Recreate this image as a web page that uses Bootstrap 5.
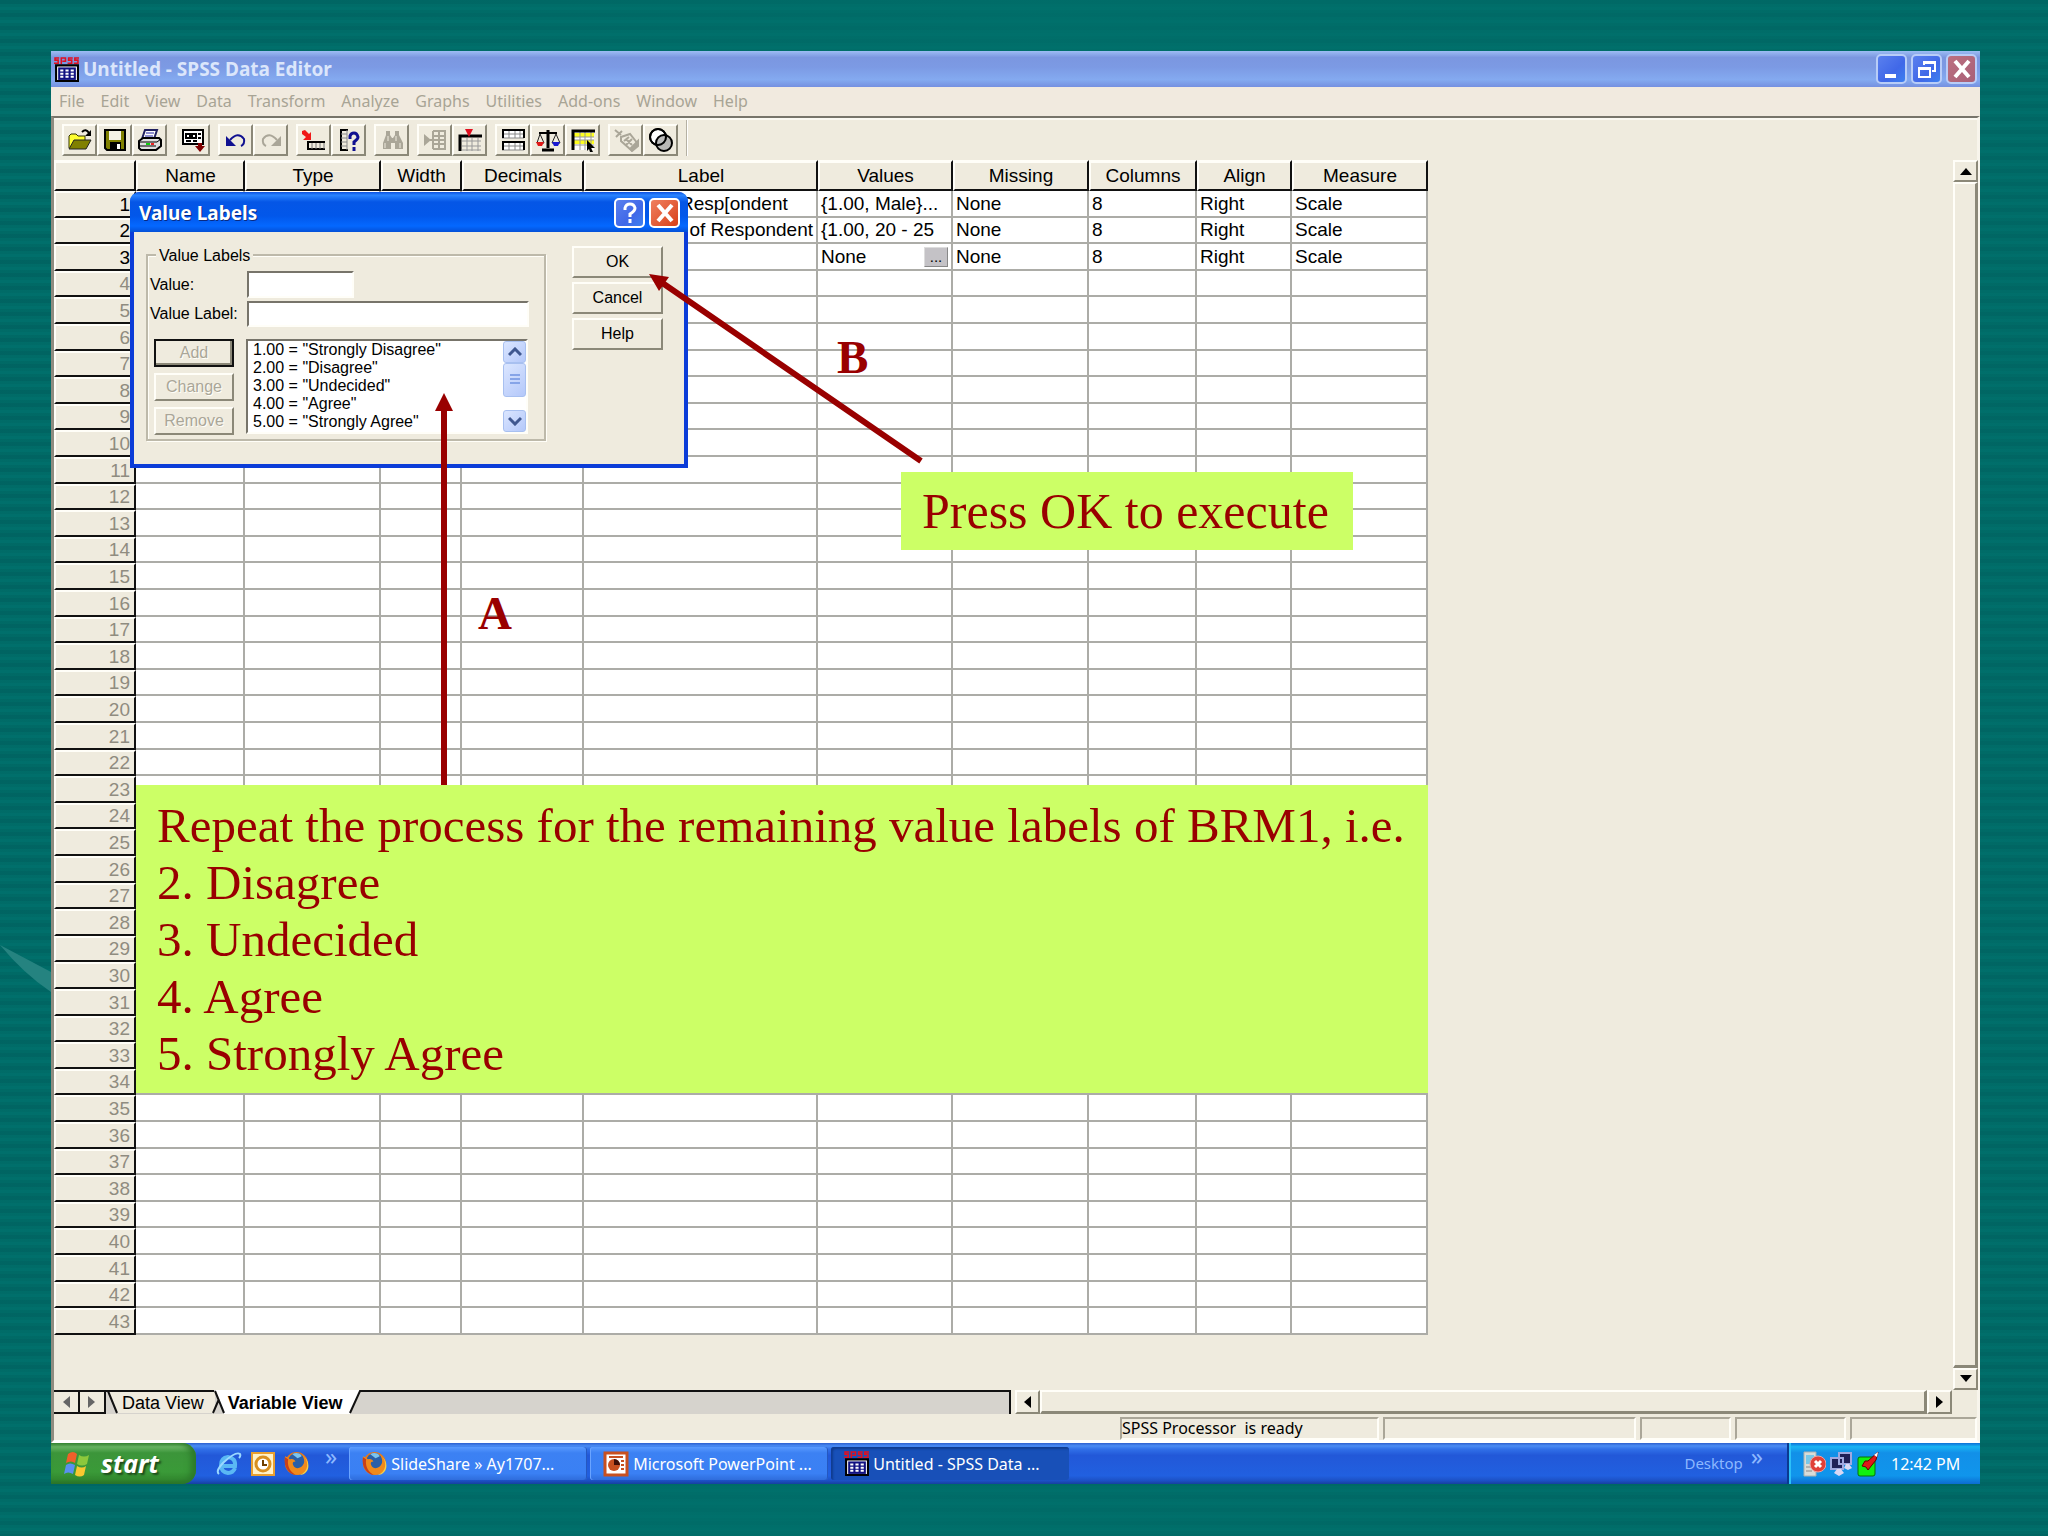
<!DOCTYPE html>
<html lang="en">
<head>
<meta charset="utf-8">
<meta name="viewport" content="width=device-width, initial-scale=1">
<title>Untitled - SPSS Data Editor</title>
<link href="https://cdn.jsdelivr.net/npm/bootstrap@5.3.0/dist/css/bootstrap.min.css" rel="stylesheet">
<style>
:root{--face:#efebde;--shade:#8b8878;--line:#acaca7;--maroon:#990000;--lime:#ccff66}
body{background:#006b68;font-family:"Liberation Sans",Arial,sans-serif;color:#000}
button,input,select{font:inherit;color:inherit;border-radius:0}
.slide{min-height:100vh;padding:51px 68px 52px 51px;background:
 linear-gradient(100deg,rgba(0,110,106,0) 0,rgba(0,112,107,.75) 45%,rgba(0,108,104,.2) 100%),
 repeating-linear-gradient(#006361 0 4px,#006b67 4px 7px,#006f6b 7px 10px,#006965 10px 13px)}
.streak{left:0;top:940px;width:51px;height:54px}
.appwin{background:var(--face)}
.tahoma{font-family:"Noto Sans","Open Sans",sans-serif}
.titlebar{height:36px;padding:0 3px;background:linear-gradient(#9dbdf4,#7b97e0 18%,#7c9ae4 45%,#84aaf0 80%,#7590e0);color:#dbe6fb;font-size:19px;font-weight:700}
.winbtn{width:31px;height:30px;padding:0;border:2px solid #b8cdf8;border-radius:5px;background:linear-gradient(135deg,#5a80ee,#4068e8 60%,#3c80f0);line-height:0}
.winbtn.closer{background:linear-gradient(135deg,#bc7080,#a86078)}
.menubar{height:29px;padding-bottom:2px;background:#f1eadf;font-size:16px}
.menubar a{color:#a8a495;text-decoration:none;padding:0 8px}
.client{border-top:2px solid #77746a;border-left:3px solid #8f8c80;border-right:3px solid #f8f5ec;border-bottom:3px solid #fff}
.toolbar{height:42px;padding:6px 0 0 8px;box-shadow:inset 0 2px #fbf9f2}
.toolset{display:flex;margin-right:8px}
.tool{width:35px;height:32px;padding:0;border:2px solid;border-color:#fffef8 #8b8878 #8b8878 #fffef8;background:var(--face);line-height:0}
.toolend{width:2px;height:36px;margin-top:-4px;background:#b5b1a3;border-right:1px solid #fff}
.grid{table-layout:fixed;width:1374px;border-collapse:separate;border-spacing:0;font-size:19px;line-height:22px}
.grid th{font-weight:400;background:var(--face)}
.grid thead th{height:31px;padding:0;text-align:center;border:2px solid;border-color:#fffef8 #111 #111 #fffef8;box-shadow:inset 0 1px #fffef8;line-height:24px}
.grid tbody th{padding:0 4px 0 0;text-align:right;border:2px solid;border-color:#fffef8 #111 #111 #fffef8;color:#8f8c80}
.grid tbody tr{height:27px}
.grid tbody tr:nth-child(5n+2),.grid tbody tr:nth-child(5n+4){height:26px}
.grid tbody td{padding:0 3px;background:#fff;border-right:2px solid var(--line);border-bottom:2px solid var(--line);white-space:nowrap;overflow:hidden}
.grid tbody tr.filled th{color:#000}
.grid .morebtn{width:24px;height:20px;padding:0;margin-top:1px;border:1px solid;border-color:#ddd #888 #888 #ddd;background:#c4c2c6;line-height:8px;font-size:15px}
.vscroll{width:25px;margin-right:-1px}
.sbtn{width:25px;height:24px;padding:0;border:2px solid;border-color:#fffef8 #8b8878 #8b8878 #fffef8;background:var(--face);line-height:0}
.vscroll .sbtn{height:22px}
.sthumb{border:2px solid;border-color:#fffef8 #8b8878 #8b8878 #fffef8;border-width:2px 3px 3px 2px}
.sheetbar{height:24px;margin-right:25px}
.tabstrip{width:957px;border-top:2px solid #111;border-right:2px solid #111}
.tabbtn{width:26px;border:0;border-right:2px solid #111;border-bottom:2px solid #111;padding:0;background:var(--face);line-height:0}
.tabfill{position:relative;background:#d6d3cd}
.tabart{position:absolute;left:0;top:-2px;width:260px;height:24px}
.tabfill a{position:relative;color:#000;text-decoration:none;font-size:18px;line-height:22px}
.statusbar{height:26px;padding-top:3px;gap:4px;font-size:16px;line-height:18px}
.pane{border:2px solid;border-color:#aaa698 #fffef8 #fffef8 #aaa698;height:23px;white-space:pre}
.taskbar{height:41px;background:linear-gradient(#2c5fd0,#4a8cf4 7%,#3170e8 15%,#2258d8 30%,#2160e0 80%,#1c50c4 92%,#1640a0);color:#fff;font-size:16px}
.startbtn{width:145px;border:0;border-radius:0 14px 14px 0;padding:0 0 0 12px;background:linear-gradient(#3f8f3c,#6cb868 9%,#3c953a 24%,#3a9a38 70%,#338a30 88%,#2a7028);box-shadow:inset -5px 0 6px #2c7a2a;color:#fff;font-size:25px;font-weight:700;font-style:italic;text-shadow:2px 2px 2px #1c4a1a}
.tasks{gap:3px}
.task{width:238px;height:33px;border:0;border-radius:3px;padding:0 0 0 13px;background:linear-gradient(#5a9bff,#3c81f3 18%,#3a80f4 80%,#2f6ddc);box-shadow:inset 1px 0 #6aa4ff,inset -1px 0 #2558c0;color:#fff;white-space:nowrap;text-align:left}
.task.pressed{background:#1850b8;box-shadow:inset 2px 2px 2px #103c90}
.tray{width:193px;gap:3px;padding-left:13px;background:linear-gradient(#0d70d8,#19b4f4 9%,#1290e8 24%,#1095ec 80%,#0c6cd0);border-left:2px solid #0a3a90;box-shadow:inset 2px 0 #2cc0f8}
.dim{color:#8cb8ff}
.desklabel{font-size:15px}
.dialogbox{left:79px;top:141px;width:558px;border:4px solid #0b3cd8;border-top:0;border-radius:10px 10px 0 0;background:var(--face);font-size:16px;line-height:18px}
.dlgtitle{height:40px;margin:0 -4px;padding:1px 8px 0 9px;border-radius:9px 9px 0 0;background:linear-gradient(#0a50e0,#2a84ff 8%,#0556e6 25%,#0257ea 60%,#0468ff 85%,#0450d8);color:#fff;font-size:19px;font-weight:700;text-shadow:1px 1px #0a2a80}
.dlgtitle .winbtn{border-color:#fff}
.dlgtitle .closer{background:linear-gradient(135deg,#f08060,#d84018)}
.dlgbody{padding:14px 21px 23px 12px;gap:26px}
.vgroup{width:402px;border:2px solid #bdb9aa;box-shadow:inset 1px 1px #fffef8,1px 1px #fffef8;margin-top:8px;padding:15px 0 4px 2px;position:relative}
.vgroup legend{position:absolute;left:8px;top:-10px;float:none;width:auto;margin:0;padding:0 3px;background:var(--face);font-size:16px;line-height:20px}
.vrow{display:flex;align-items:center}
.vrow label{width:97px;white-space:nowrap}
.vrow + .vrow{margin-top:3px}
.sunk{border:2px solid;border-color:#77746a #fffef8 #fffef8 #77746a;background:#fff;padding:0;outline:0}
.vbtns{gap:6px}
.vbtn{width:80px;height:28px;padding:0;border:2px solid;border-color:#fffef8 #8b8878 #8b8878 #fffef8;background:var(--face)}
.vbtn:disabled{color:#aaa698;text-shadow:1px 1px #fffef8}
.vbtn.preset{border-color:#111;box-shadow:inset -2px -2px #8b8878}
.okbtn{width:91px;height:32px;padding:0;border:2px solid;border-color:#fffef8 #8b8878 #8b8878 #fffef8;background:var(--face)}
.listbox{width:282px;height:95px}
.listbox select{border:0;outline:0;appearance:none;-webkit-appearance:none;background:#fff;overflow:hidden;padding:0;height:91px}
.listbox option{padding:0 5px;min-height:18px;line-height:18px}
.xpbtn{width:23px;height:22px;padding:0;border:1px solid #a8c0f0;border-radius:3px;background:linear-gradient(135deg,#dbe6ff,#b4c8fa);line-height:0}
.xpthumb{height:34px}
.callout{background:var(--lime);color:var(--maroon);font-family:"Liberation Serif",Georgia,serif;line-height:57px;white-space:nowrap}
.pressbox{left:850px;top:421px;width:452px;padding:11px 21px 10px;font-size:50px}
.repeatbox{left:85px;top:734px;width:1292px;padding:12px 21px 11px;font-size:49px}
.letter{color:var(--maroon);font-family:"Liberation Serif",Georgia,serif;font-size:47px;line-height:52px;font-weight:700}
.lettera{left:427px;top:536px}
.letterb{left:786px;top:280px}
.arrows{left:0;top:0;width:1000px;height:740px;pointer-events:none}
</style>
<script src="https://cdn.jsdelivr.net/npm/bootstrap@5.3.0/dist/js/bootstrap.bundle.min.js"></script>
</head>
<body>
<svg width="0" height="0" class="position-absolute" aria-hidden="true">
 <symbol id="spss" viewBox="0 0 24 24"><path d="M5 1H1v2h3v3H0M7 7V1h4v3H8M18 1h-4v2h3v3h-4M24 1h-4v2h3v3h-4" fill="none" stroke="#e01020" stroke-width="1.5"/><path d="M2 8h21v15H2z" fill="#fff" stroke="#000" stroke-width="2"/><path d="M4 10h17v12H4z" fill="#101080"/><path d="M6 13h3m2 0h3m2 0h3M6 16h3m2 0h3m2 0h3M6 19h3m2 0h3m2 0h3" stroke="#fff" stroke-width="2"/></symbol>
 <symbol id="fox" viewBox="0 0 24 24"><circle cx="12" cy="12" r="11" fill="#e8791a"/><circle cx="12" cy="10" r="8" fill="#2a5fa8"/><path d="M8 3c3-2 8-1 9 2l-4 2z" fill="#7cc4ee"/><path d="M1 5c3 1 4 3 5 3 2-1 4 0 5 2-3 0-3 2-2 4 2 4 8 3 10-2 1-3 0-6-2-9 7 5 8 13 2 18C11 26-1 20 1 5z" fill="#f08a1c"/><path d="M20 6c5 8 1 15-5 17 9 0 11-11 5-17z" fill="#fcd040"/><path d="M1 6c-2 9 4 16 10 17C5 19 3 14 4 8z" fill="#c8401a"/></symbol>
 <symbol id="cross" viewBox="0 0 24 24"><path d="M5 4l14 16M19 4L5 20" stroke="#fff" stroke-width="4"/></symbol>
</svg>

<main class="slide position-relative d-flex">
 <svg class="streak position-absolute" viewBox="0 0 51 54" aria-hidden="true"><path d="M0 5L51 32v20Q24 34 0 5z" fill="#258380"/></svg>
 <div class="appwin position-relative d-flex flex-column flex-grow-1">

  <header class="titlebar tahoma d-flex align-items-center gap-1">
   <svg width="25" height="25" aria-hidden="true"><use href="#spss"/></svg>
   <span class="flex-grow-1">Untitled - SPSS Data Editor</span>
   <button class="winbtn" aria-label="Minimize"><svg width="24" height="24"><path d="M5 17h11v4H5z" fill="#fff"/></svg></button>
   <button class="winbtn" aria-label="Restore"><svg width="24" height="24" fill="none" stroke="#fff" stroke-width="2"><path d="M4 11h11v9H4zM4 12h11M9 8V5h11v9h-3M9 6h11"/></svg></button>
   <button class="winbtn closer" aria-label="Close"><svg width="24" height="24"><use href="#cross"/></svg></button>
  </header>

  <nav class="menubar tahoma d-flex align-items-center">
   <a href="#">File</a><a href="#">Edit</a><a href="#">View</a><a href="#">Data</a><a href="#">Transform</a><a href="#">Analyze</a><a href="#">Graphs</a><a href="#">Utilities</a><a href="#">Add-ons</a><a href="#">Window</a><a href="#">Help</a>
  </nav>

  <div class="client d-flex flex-column flex-grow-1">
   <div class="toolbar d-flex">
    <div class="toolset">
     <button class="tool" aria-label="Open"><svg width="26" height="24"><path d="M2 20V8l2-2h5l2 2h7v4" fill="#ffff30" stroke="#333300"/><path d="M2 21l5-9h17l-5 9z" fill="#808000" stroke="#222"/><path d="M15 4q4-4 7 1" fill="none" stroke="#000" stroke-width="2"/><path d="M24 2v6h-6z"/></svg></button>
     <button class="tool" aria-label="Save"><svg width="26" height="24"><path d="M3 2h20v20H5l-2-2z" fill="#808000" stroke="#000" stroke-width="2"/><path d="M7 3h12v9H7z" fill="#f4f2e6"/><path d="M8 14h11v8H8z"/><path d="M15 16h3v5h-3z" fill="#fff"/></svg></button>
     <button class="tool" aria-label="Print"><svg width="26" height="24"><path d="M8 2h12l-3 9H5z" fill="#fff" stroke="#202060" stroke-width="2"/><path d="M9 5h8M8 8h8" stroke="#2020a0"/><path d="M2 13l4-3h16l2 2v6l-5 4H4l-2-2z" fill="#ddd" stroke="#000" stroke-width="2"/><path d="M3 14h17l4-3M3 18h16" stroke="#000" fill="none"/><path d="M9 15h4v2H9z" fill="#1c1"/><path d="M14 15h3v2h-3z" fill="#e22"/></svg></button>
    </div>
    <div class="toolset">
     <button class="tool" aria-label="Recall dialogs"><svg width="26" height="24"><path d="M3 2h20v14H3z" fill="#fff" stroke="#000" stroke-width="2"/><path d="M6 6h4v4H6zM12 6h4v4h-4z" fill="none" stroke="#000" stroke-width="2"/><path d="M18 6h3m-3 4h3M6 13h5m2 0h4" stroke="#000" stroke-width="2"/><path d="M15 18h3v-3h4v3h3l-5 6z" fill="#800000"/></svg></button>
    </div>
    <div class="toolset">
     <button class="tool" aria-label="Undo"><svg width="26" height="24"><path d="M7 12q8-9 14-1q1 5-3 7" fill="none" stroke="#101090" stroke-width="2"/><path d="M3 8v10h10z" fill="#101090"/></svg></button>
     <button class="tool" aria-label="Redo"><svg width="26" height="24"><path d="M19 12q-8-9-14-1q-1 5 3 7" fill="none" stroke="#aaa698" stroke-width="2"/><path d="M23 8v10H13z" fill="#aaa698"/></svg></button>
    </div>
    <div class="toolset">
     <button class="tool" aria-label="Go to case"><svg width="26" height="24"><path d="M1 3l3-1 4 4 2-2v8H2l3-3-4-3z" fill="#f01818"/><path d="M24 14H7v7h17" fill="none" stroke="#000" stroke-width="2"/><path d="M11 15v6m4-6v6m4-6v6m4-6v6" stroke="#777"/></svg></button>
     <button class="tool" aria-label="Variables"><svg width="26" height="24"><path d="M5 2h7M5 22h7M5 1v22" stroke="#000" stroke-width="2" fill="none"/><path d="M5 6h6m-6 4h6m-6 4h6m-6 4h6M11 2v20" stroke="#888"/><path d="M14 11V8q1-3 4-3t4 4q0 2-4 5v3m0 2v4" fill="none" stroke="#101090" stroke-width="3"/></svg></button>
    </div>
    <div class="toolset">
     <button class="tool" aria-label="Find"><svg width="26" height="24" fill="#aaa698"><path d="M7 3h4v4l2 3h1l2-3V3h4v4l4 8v6h-8v-6h-4v6H4v-6l3-8z"/><path d="M6 15v5M9 8v5m8-5v5m4 2v5" stroke="#efebde"/></svg></button>
    </div>
    <div class="toolset">
     <button class="tool" aria-label="Insert cases"><svg width="26" height="24"><path d="M2 6l7 6-7 6z" fill="#aaa698"/><path d="M11 3h13M11 8h13M8 12h16M11 16h13M11 21h13M11 3v18M17 3v19M23 3v19" stroke="#aaa698" stroke-width="2"/></svg></button>
     <button class="tool" aria-label="Insert variable"><svg width="26" height="24"><path d="M3 23V8h22" fill="none" stroke="#000" stroke-width="3"/><path d="M5 13h19M5 18h19M5 22h19M10 10v13m5-13v13m6-13v13" stroke="#999" stroke-width="1"/><path d="M8 1h8l-4 8z" fill="#e01020"/></svg></button>
    </div>
    <div class="toolset">
     <button class="tool" aria-label="Split file"><svg width="26" height="24"><path d="M2 2h22v8H2zM2 14h22v8H2z" fill="#fff"/><path d="M2 6h22M2 18h22M9 2v8m6-8v8m5-8v8M9 14v8m6-8v8m5-8v8M2 10h22M2 22h22" stroke="#888"/><path d="M2 2h23M2 14h23" stroke="#000" stroke-width="2"/><path d="M3 1v9m0 3v9M24 1v9m0 3v9" stroke="#000" stroke-width="2"/></svg></button>
     <button class="tool" aria-label="Weight cases"><svg width="26" height="24"><path d="M13 2v18M7 22h12" stroke="#000" stroke-width="3"/><path d="M4 5h18" stroke="#000" stroke-width="2"/><path d="M5 6L2 15h7zM21 6l-4 9h8z" fill="none" stroke="#222"/><path d="M1 14h8l-2 4H3z" fill="#e01818"/><path d="M17 14h8l-2 4h-4z" fill="#1818d0"/></svg></button>
     <button class="tool" aria-label="Select cases"><svg width="26" height="24"><path d="M4 3h20v19H4z" fill="#fff"/><path d="M4 5h20v4H4zM4 12h20v4H4z" fill="#ffff20"/><path d="M4 9h20M4 12h20M4 17h20M10 4v18m5-18v18m6-18v18" stroke="#999"/><path d="M3 22V3h22" fill="none" stroke="#000" stroke-width="3"/><path d="M17 12l8 8h-4l2 4h-3l-1-3-2 2z"/></svg></button>
    </div>
    <div class="toolset">
     <button class="tool" aria-label="Value labels"><svg width="26" height="24" fill="none" stroke="#aaa698" stroke-width="2"><path d="M2 2l6 5m-5 2l6-6M8 9l9-3 8 10-7 6L8 13zM13 11l6 6m-6 0l6-6m-8 2l5-4"/><path d="M18 20l7-7v5l-6 5z" fill="#aaa698"/></svg></button>
     <button class="tool" aria-label="Use sets"><svg width="26" height="24" stroke="#000" stroke-width="2"><circle cx="10" cy="9" r="8" fill="#fff"/><circle cx="16" cy="15" r="8" fill="#aaa" fill-opacity=".8"/><circle cx="10" cy="9" r="8" fill="none"/></svg></button>
    </div>
    <div class="toolend"></div>
   </div>

   <div class="d-flex flex-grow-1">
    <div class="flex-grow-1">
     <table class="grid">
      <colgroup><col style="width:82px"><col style="width:109px"><col style="width:136px"><col style="width:81px"><col style="width:122px"><col style="width:234px"><col style="width:135px"><col style="width:136px"><col style="width:108px"><col style="width:95px"><col style="width:136px"></colgroup>
      <thead><tr><th></th><th>Name</th><th>Type</th><th>Width</th><th>Decimals</th><th>Label</th><th>Values</th><th>Missing</th><th>Columns</th><th>Align</th><th>Measure</th></tr></thead>
      <tbody id="vars">
       <tr class="filled"><th>1</th><td></td><td></td><td></td><td></td><td class="ps-5"><span class="ms-5">Resp[ondent</span></td><td>{1.00, Male}...</td><td>None</td><td>8</td><td>Right</td><td>Scale</td></tr>
       <tr class="filled"><th>2</th><td></td><td></td><td></td><td></td><td class="text-end">of Respondent</td><td>{1.00, 20 - 25</td><td>None</td><td>8</td><td>Right</td><td>Scale</td></tr>
       <tr class="filled"><th>3</th><td></td><td></td><td></td><td></td><td></td><td><div class="d-flex justify-content-between">None<button class="morebtn" aria-label="Edit values">...</button></div></td><td>None</td><td>8</td><td>Right</td><td>Scale</td></tr>
      </tbody>
     </table>
    </div>
    <div class="vscroll d-flex flex-column">
     <button class="sbtn" aria-label="Scroll up"><svg width="12" height="8"><path d="M0 8l6-7 6 7z"/></svg></button>
     <div class="sthumb flex-grow-1"></div>
     <button class="sbtn" aria-label="Scroll down"><svg width="12" height="8"><path d="M0 0l6 7 6-7z"/></svg></button>
    </div>
   </div>

   <div class="sheetbar d-flex">
    <div class="tabstrip d-flex">
     <button class="tabbtn" aria-label="Previous tab"><svg width="8" height="12"><path d="M8 0v12L1 6z" fill="#666"/></svg></button>
     <button class="tabbtn" aria-label="Next tab"><svg width="8" height="12"><path d="M0 0v12l7-6z" fill="#666"/></svg></button>
     <nav class="tabfill flex-grow-1">
      <svg class="tabart" aria-hidden="true"><path d="M2 1l9 22h98V1z" fill="#efebde"/><path d="M108 0h147l-11 24H118z" fill="#fff"/><path d="M0 1h108M2 1l9 22M118 23L109 1M107 23l6-14M244 23l10-22h6" fill="none" stroke="#111" stroke-width="2"/></svg>
      <a href="#" class="ms-3">Data View</a><a href="#" class="ms-4 fw-bold">Variable View</a>
     </nav>
    </div>
    <div class="d-flex flex-grow-1 ms-1">
     <button class="sbtn" aria-label="Scroll left"><svg width="8" height="12"><path d="M7 0v12L0 6z"/></svg></button>
     <div class="sthumb flex-grow-1"></div>
     <button class="sbtn" aria-label="Scroll right"><svg width="8" height="12"><path d="M0 0v12l7-6z"/></svg></button>
    </div>
   </div>

   <footer class="statusbar tahoma d-flex justify-content-end">
    <div class="pane" style="width:259px">SPSS Processor  is ready</div><div class="pane" style="width:253px"></div><div class="pane" style="width:91px"></div><div class="pane" style="width:111px"></div><div class="pane" style="width:127px"></div>
   </footer>
  </div>

  <div class="taskbar tahoma d-flex align-items-center">
   <button class="startbtn align-self-stretch d-flex align-items-center gap-2"><svg width="30" height="28" aria-hidden="true"><path d="M5 4q5-4 9 0l-2 9q-4-3-9 0z" fill="#f0602a"/><path d="M16 5q5 3 10 0l-2 9q-5 3-10 0z" fill="#8cc83c"/><path d="M3 15q4-3 9 0l-2 9q-5-3-9 0z" fill="#5a90f0"/><path d="M14 16q5 3 9 0l-2 9q-4 3-9 0z" fill="#f8c830"/></svg>start</button>
   <div class="d-flex align-items-center ps-3 ms-1 gap-2 flex-grow-1">
    <svg width="26" height="26" aria-label="Internet Explorer"><path d="M19 17q-2 5-7 5-7-1-7-8t7-8q8 1 7 9H6" fill="none" stroke="#5ab8f4" stroke-width="4"/><path d="M3 23q-4-3 5-12Q20 0 24 3q1 2-1 4" fill="none" stroke="#9ad8ff" stroke-width="2"/></svg>
    <svg width="26" height="26" aria-label="Outlook"><path d="M2 2h22v22H2z" fill="#fff2c8" stroke="#e8a030" stroke-width="2"/><circle cx="13" cy="13" r="7" fill="#fff" stroke="#d89020" stroke-width="3"/><path d="M13 9v5h4" fill="none" stroke="#704000" stroke-width="2"/></svg>
    <svg width="25" height="25" aria-label="Firefox"><use href="#fox"/></svg>
    <span class="dim fs-4 lh-1 mb-3 ms-2 me-1">»</span>
    <div class="tasks d-flex">
     <button class="task d-flex align-items-center gap-1"><svg width="25" height="25" aria-hidden="true"><use href="#fox"/></svg><span>SlideShare » Ay1707...</span></button>
     <button class="task d-flex align-items-center gap-1"><svg width="26" height="26" aria-hidden="true"><path d="M2 2h22v22H2z" fill="#fff" stroke="#c85020" stroke-width="3"/><path d="M6 6h14M18 10h3m-3 4h3m-3 4h3" stroke="#c85020" stroke-width="2"/><circle cx="11" cy="14" r="6" fill="#c85020"/><path d="M11 14V8a6 6 0 0 1 6 6z" fill="#401008"/></svg><span>Microsoft PowerPoint ...</span></button>
     <button class="task pressed d-flex align-items-center gap-1"><svg width="25" height="25" aria-hidden="true"><use href="#spss"/></svg><span>Untitled - SPSS Data ...</span></button>
    </div>
   </div>
   <span class="dim desklabel">Desktop</span><span class="dim fs-4 lh-1 mb-3 ms-2 me-4">»</span>
   <div class="tray align-self-stretch d-flex align-items-center">
    <svg width="24" height="26" aria-label="Messenger"><path d="M2 1h12v24H2z" fill="#d8dcd8" stroke="#a8b0b0"/><path d="M4 4h8v9H4z" fill="#78c8e8"/><path d="M4 16h6m-6 4h6" stroke="#888"/><circle cx="16" cy="13" r="8" fill="#e04038" stroke="#f0a0a0"/><path d="M13 10l6 6m0-6l-6 6" stroke="#fff" stroke-width="3"/></svg>
    <svg width="24" height="26" aria-label="Network"><path d="M10 2h12v11H10zM2 7h12v11H2z" fill="#202058" stroke="#a0a8e0" stroke-width="2"/><path d="M5 22l3-4h4l3 4-5 3zM15 17l2-4h3l3 4-4 2z" fill="#d8d8f4"/></svg>
    <svg width="24" height="26" aria-label="Quick launch"><rect x="2" y="6" width="17" height="19" rx="2" fill="#10f010" stroke="#087008"/><path d="M22 1l-2 8-8 10-2-3-4-1 3-5h3z" fill="#e01818" stroke="#600"/><path d="M22 1l-1 5-3-2z" fill="#fff"/></svg>
    <span class="ms-2">12:42 PM</span>
   </div>
  </div>

  <section class="dialogbox position-absolute" role="dialog" aria-label="Value Labels">
   <div class="dlgtitle tahoma d-flex align-items-center gap-1"><span class="flex-grow-1">Value Labels</span>
    <button class="winbtn" aria-label="Context help"><svg width="24" height="24"><path d="M7 9V7q1-4 5-4t5 4q0 3-5 6v3m0 2v4" fill="none" stroke="#fff" stroke-width="3"/></svg></button>
    <button class="winbtn closer" aria-label="Close dialog"><svg width="24" height="24"><use href="#cross"/></svg></button></div>
   <div class="dlgbody d-flex">
    <fieldset class="vgroup"><legend>Value Labels</legend>
     <div class="vrow"><label for="val">Value:</label><input id="val" class="sunk" style="width:107px;height:27px"></div>
     <div class="vrow"><label for="vlab">Value Label:</label><input id="vlab" class="sunk" style="width:282px;height:26px"></div>
     <div class="d-flex mt-2 pt-1">
      <div class="vbtns d-flex flex-column ms-1 me-2 pe-1"><button class="vbtn preset" disabled>Add</button><button class="vbtn" disabled>Change</button><button class="vbtn" disabled>Remove</button></div>
      <div class="listbox sunk d-flex">
       <select size="5" class="flex-grow-1" aria-label="Defined value labels"><option>1.00 = "Strongly Disagree"</option><option>2.00 = "Disagree"</option><option>3.00 = "Undecided"</option><option>4.00 = "Agree"</option><option>5.00 = "Strongly Agree"</option></select>
       <div class="d-flex flex-column">
        <button class="xpbtn" aria-label="List up"><svg width="14" height="10"><path d="M1 8l6-6 6 6" fill="none" stroke="#405890" stroke-width="3"/></svg></button>
        <div class="xpbtn xpthumb d-flex align-items-center justify-content-center"><svg width="10" height="12"><path d="M0 1h10M0 5h10M0 9h10" stroke="#86a4e8" stroke-width="2"/></svg></div>
        <button class="xpbtn mt-auto" aria-label="List down"><svg width="14" height="10"><path d="M1 2l6 6 6-6" fill="none" stroke="#405890" stroke-width="3"/></svg></button>
       </div>
      </div>
     </div>
    </fieldset>
    <div class="d-flex flex-column gap-1"><button class="okbtn">OK</button><button class="okbtn">Cancel</button><button class="okbtn">Help</button></div>
   </div>
  </section>

  <div class="callout pressbox position-absolute">Press OK to execute</div>
  <div class="callout repeatbox position-absolute">Repeat the process for the remaining value labels of BRM1, i.e.<br>2. Disagree<br>3. Undecided<br>4. Agree<br>5. Strongly Agree</div>
  <div class="letter lettera position-absolute">A</div>
  <div class="letter letterb position-absolute">B</div>
  <svg class="arrows position-absolute" aria-hidden="true"><g stroke="#900" stroke-width="6" fill="#900"><path d="M393 734V356M870 410L610 231" /><path d="M393 342l9 18h-18zM598 223l20 3-10 14z" stroke="none"/></g></svg>
 </div>
</main>
<script>
// Empty variable rows 4 to 43
const body = document.getElementById('vars');
for (let n = 4; n <= 43; n++) {
  const row = body.insertRow();
  const head = document.createElement('th');
  head.textContent = n;
  row.append(head);
  for (let c = 0; c < 10; c++) row.insertCell();
}
</script>
</body>
</html>
